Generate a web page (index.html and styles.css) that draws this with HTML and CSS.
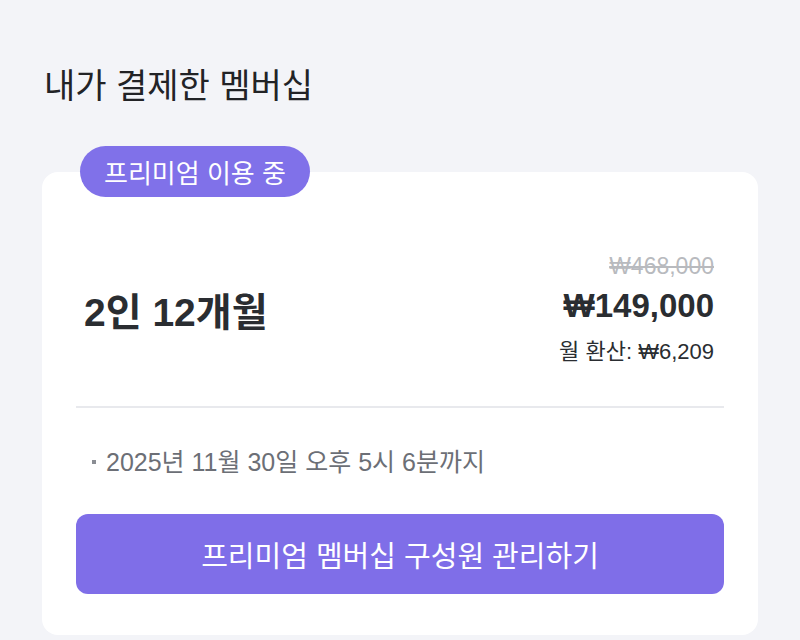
FILE: index.html
```html
<!DOCTYPE html>
<html lang="ko">
<head>
<meta charset="utf-8">
<link rel="stylesheet" href="styles.css">
</head>
<body>
<div class="page">
  <h1 class="title">내가 결제한 멤버십</h1>
  <div class="badge">프리미엄 이용 중</div>
  <div class="card">
    <div class="plan-row">
      <div class="plan-name">2인 12개월</div>
      <div class="prices">
        <div class="old-price">₩468,000</div>
        <div class="now-price">₩149,000</div>
        <div class="monthly">월 환산: ₩6,209</div>
      </div>
    </div>
    <div class="divider"></div>
    <div class="expiry"><span class="dot"></span>2025년 11월 30일 오후 5시 6분까지</div>
    <button class="manage">프리미엄 멤버십 구성원 관리하기</button>
  </div>
</div>
</body>
</html>
```

FILE: styles.css
```css
html, body {
  margin: 0;
  padding: 0;
  background: #f3f4f8;
  font-family: "Liberation Sans", "Noto Sans CJK KR", sans-serif;
}
.page {
  padding: 64px 42px 0;
  display: flex;
  flex-direction: column;
  align-items: flex-start;
}
.title {
  margin: 0 0 0 2px;
  font-size: 34px;
  line-height: 44px;
  font-weight: 400;
  color: #222326;
}
.badge {
  margin: 38px 0 -25px 38px;
  height: 51px;
  padding: 0 24px;
  display: flex;
  align-items: center;
  border-radius: 26px;
  background: #8071e9;
  color: #fff;
  font-size: 26px;
  font-weight: 400;
  position: relative;
  z-index: 1;
}
.card {
  align-self: stretch;
  background: #fff;
  border-radius: 16px;
  padding: 80px 34px 41px;
  display: flex;
  flex-direction: column;
}
.plan-row {
  display: flex;
  justify-content: space-between;
  align-items: center;
  padding: 0 10px 0 8px;
}
.plan-name {
  font-size: 39px;
  font-weight: 700;
  color: #2a2d31;
}
.prices {
  text-align: right;
}
.old-price {
  font-size: 23px;
  line-height: 28px;
  color: #b8babe;
  text-decoration: line-through;
}
.now-price {
  margin-top: 6px;
  font-size: 33px;
  line-height: 40px;
  font-weight: 700;
  color: #2a2d31;
}
.monthly {
  margin-top: 12px;
  font-size: 22px;
  line-height: 28px;
  color: #2a2d31;
}
.divider {
  margin-top: 40px;
  height: 2px;
  background: #e8e9ed;
}
.expiry {
  margin-top: 38px;
  padding-left: 16px;
  display: flex;
  align-items: center;
  font-size: 25px;
  line-height: 32px;
  color: #6c6f76;
}
.dot {
  width: 4px;
  height: 4px;
  background: #8a8d93;
  margin-right: 10px;
}
.manage {
  margin-top: 36px;
  height: 80px;
  border: none;
  border-radius: 12px;
  background: #7f6ee8;
  color: #fff;
  font-family: inherit;
  font-size: 29px;
  font-weight: 400;
}
```
